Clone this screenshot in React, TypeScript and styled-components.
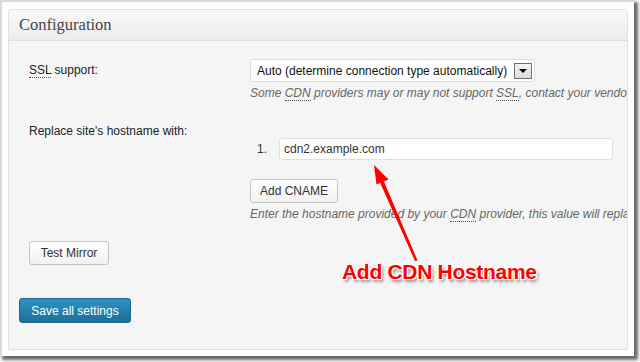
import React from "react";
import styled, { createGlobalStyle } from "styled-components";

const Global = createGlobalStyle`
  html, body { margin: 0; padding: 0; background: #ffffff; }
  body { width: 640px; height: 362px; overflow: hidden; font-family: "Liberation Sans", Arial, sans-serif; }
`;

const Frame = styled.div`
  position: relative;
  box-sizing: border-box;
  width: 634px;
  height: 356px;
  background: #ffffff;
  border-top: 2px solid #d9d9d9;
  border-left: 2px solid #d9d9d9;
  box-shadow: 3px 3px 3px 1px rgba(40, 40, 40, 0.7);
  padding: 7px 0 0 6px;
`;

const Panel = styled.section`
  box-sizing: border-box;
  width: 620px;
  height: 341px;
  border: 1px solid #e2e2e2;
  border-radius: 3px 3px 0 0;
  background: #f5f5f5;
  overflow: hidden;
  display: flex;
  flex-direction: column;
`;

const Header = styled.h3`
  margin: 0;
  height: 31px;
  box-sizing: border-box;
  padding: 0 0 0 10px;
  display: flex;
  align-items: center;
  background: linear-gradient(#f9f9f9, #ececec);
  border-bottom: 1px solid #dfdfdf;
  font-family: "Liberation Serif", Georgia, serif;
  font-weight: normal;
  font-size: 16.5px;
  color: #464646;
`;

const Body = styled.div`
  padding: 18px 0 0 10px;
  display: flex;
  flex-direction: column;
  font-size: 12px;
  color: #333;
`;

const FormTable = styled.div`
  margin-left: 10px;
  display: grid;
  grid-template-columns: 221px 1fr;
  row-gap: 24px;
`;

const Label = styled.div<{ $top: number }>`
  padding-top: ${(p) => p.$top}px;
  line-height: 14px;
  color: #222;
  white-space: nowrap;
`;

const Value = styled.div<{ $top?: number }>`
  padding-top: ${(p) => p.$top ?? 0}px;
  display: flex;
  flex-direction: column;
  align-items: flex-start;
  min-width: 0;
`;

const Abbr = styled.span`
  border-bottom: 1px dotted #555;
`;

const Select = styled.div`
  box-sizing: border-box;
  width: 285px;
  height: 23px;
  border: 1px solid #dcdcdc;
  border-radius: 3px;
  background: #fff;
  display: flex;
  align-items: center;
  padding: 0 2px 0 6px;
  gap: 3px;
  color: #111;
  white-space: nowrap;
`;

const SelectText = styled.span`
  flex: 1;
`;

const DropButton = styled.span`
  box-sizing: border-box;
  width: 18px;
  height: 16px;
  border: 1px solid #707070;
  background: linear-gradient(#f4f4f4, #dcdcdc);
  display: flex;
  align-items: center;
  justify-content: center;
  &::after {
    content: "";
    border-left: 4px solid transparent;
    border-right: 4px solid transparent;
    border-top: 4px solid #000;
  }
`;

const Desc = styled.div`
  margin-top: 4px;
  line-height: 14px;
  font-style: italic;
  color: #666;
  white-space: nowrap;
`;

const ListRow = styled.div`
  display: flex;
  align-items: center;
  height: 22px;
`;

const Num = styled.span`
  width: 29px;
  padding-left: 7px;
  box-sizing: border-box;
  color: #333;
`;

const TextInput = styled.div`
  box-sizing: border-box;
  width: 334px;
  height: 22px;
  border: 1px solid #dfdfdf;
  border-radius: 3px;
  background: #fff;
  padding-left: 4px;
  display: flex;
  align-items: center;
  color: #333;
`;

const Button = styled.button<{ $mt: number; $primary?: boolean; $w: number; $h: number }>`
  margin-top: ${(p) => p.$mt}px;
  width: ${(p) => p.$w}px;
  height: ${(p) => p.$h}px;
  box-sizing: border-box;
  padding: 0;
  border-radius: 3px;
  font-family: "Liberation Sans", Arial, sans-serif;
  font-size: 12px;
  cursor: pointer;
  border: 1px solid ${(p) => (p.$primary ? "#1f6a8e" : "#c4c4c4")};
  background: ${(p) =>
    p.$primary ? "linear-gradient(#2b93c4, #1f6f96)" : "linear-gradient(#fefefe, #f2f2f2)"};
  color: ${(p) => (p.$primary ? "#fff" : "#333")};
  align-self: flex-start;
`;

const Indented = styled.div`
  margin-left: 10px;
  display: flex;
  flex-direction: column;
`;

const Overlay = styled.svg`
  position: absolute;
  left: 0;
  top: 0;
  pointer-events: none;
`;

const Callout = styled.div`
  position: absolute;
  left: 340px;
  top: 258px;
  font-family: "Liberation Sans", Arial, sans-serif;
  font-weight: bold;
  font-size: 21px;
  letter-spacing: -0.3px;
  color: #ff0000;
  white-space: nowrap;
  text-shadow: -1px -1px 0 #fff, 1px -1px 0 #fff, -1px 1px 0 #fff, 1px 1px 0 #fff,
    0 -1px 0 #fff, 0 1px 0 #fff, -1px 0 0 #fff, 1px 0 0 #fff, 2px 3px 3px rgba(0, 0, 0, 0.45);
`;

export default function App() {
  return (
    <>
      <Global />
      <Frame>
        <Panel>
          <Header>Configuration</Header>
          <Body>
            <FormTable>
              <Label $top={4}>
                <Abbr>SSL</Abbr> support:
              </Label>
              <Value>
                <Select>
                  <SelectText>Auto (determine connection type automatically)</SelectText>
                  <DropButton />
                </Select>
                <Desc>
                  Some <Abbr>CDN</Abbr> providers may or may not support <Abbr>SSL</Abbr>, contact your vendor for more information.
                </Desc>
              </Value>
              <Label $top={0}>Replace site's hostname with:</Label>
              <Value $top={14}>
                <ListRow>
                  <Num>1.</Num>
                  <TextInput>cdn2.example.com</TextInput>
                </ListRow>
                <Button $mt={19} $w={88} $h={24}>Add CNAME</Button>
                <Desc>
                  Enter the hostname provided by your <Abbr>CDN</Abbr> provider, this value will replace your site's hostname in the HTML.
                </Desc>
              </Value>
            </FormTable>
            <Indented>
              <Button $mt={20} $w={80} $h={24}>Test Mirror</Button>
            </Indented>
            <Button $mt={33} $w={112} $h={25} $primary>
              Save all settings
            </Button>
          </Body>
        </Panel>
        <Overlay width="640" height="362" viewBox="0 0 640 362">
          <polygon points="413,259 415.5,258.4 381.6,178.8 378,180.4" fill="#ff0000" />
          <polygon points="372,163 386.5,177.5 374.5,182.5" fill="#ff0000" />
        </Overlay>
        <Callout>Add CDN Hostname</Callout>
      </Frame>
    </>
  );
}
